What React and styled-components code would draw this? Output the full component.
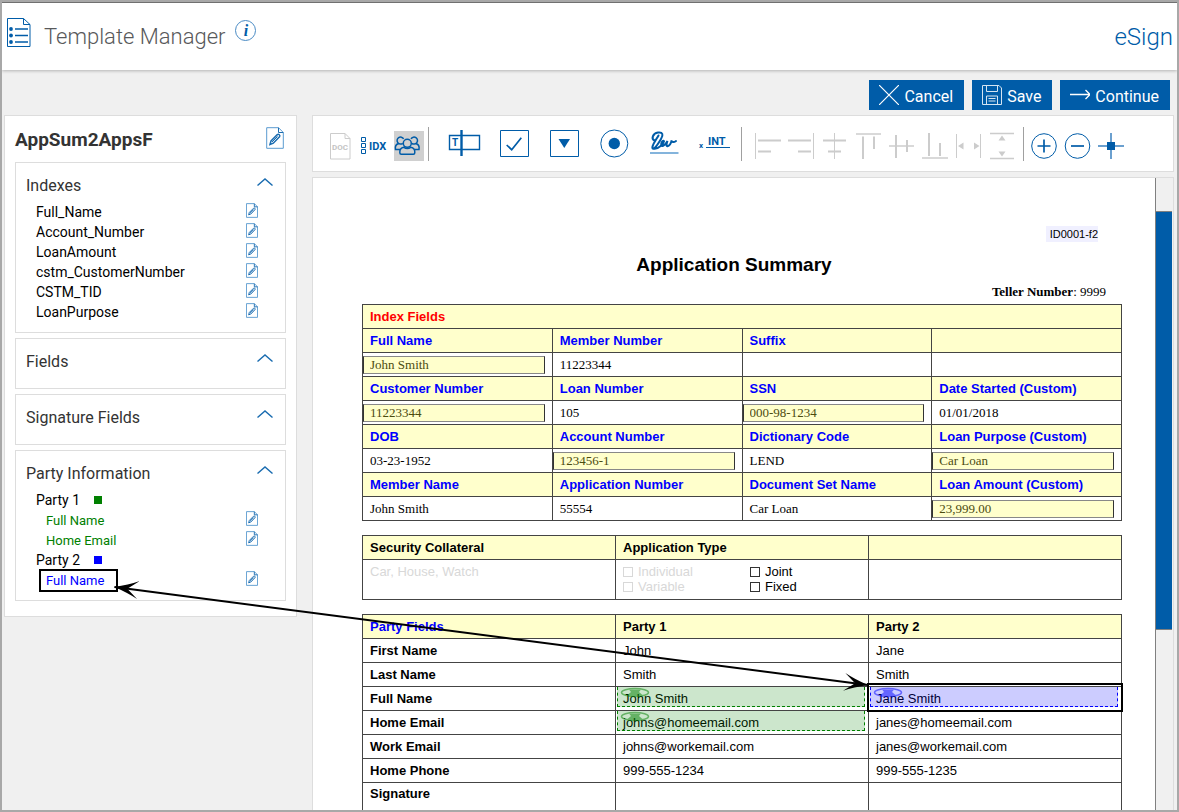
import React, { useLayoutEffect, useRef, useState } from "react";
import styled, { createGlobalStyle } from "styled-components";

const indexes = [
  "Full_Name",
  "Account_Number",
  "LoanAmount",
  "cstm_CustomerNumber",
  "CSTM_TID",
  "LoanPurpose",
];

// a cell starting with "=" is an editable index field
const indexRows = [
  ["Full Name", "Member Number", "Suffix", ""],
  ["=John Smith", "11223344", "", ""],
  ["Customer Number", "Loan Number", "SSN", "Date Started (Custom)"],
  ["=11223344", "105", "=000-98-1234", "01/01/2018"],
  ["DOB", "Account Number", "Dictionary Code", "Loan Purpose (Custom)"],
  ["03-23-1952", "=123456-1", "LEND", "=Car Loan"],
  [
    "Member Name",
    "Application Number",
    "Document Set Name",
    "Loan Amount (Custom)",
  ],
  ["John Smith", "55554", "Car Loan", "=23,999.00"],
];

const partyRows = [
  ["First Name", "John", "Jane"],
  ["Last Name", "Smith", "Smith"],
  ["Full Name", "John Smith", "Jane Smith", "green", "blue"],
  ["Home Email", "johns@homeemail.com", "janes@homeemail.com", "green"],
  ["Work Email", "johns@workemail.com", "janes@workemail.com"],
  ["Home Phone", "999-555-1234", "999-555-1235"],
];

const PageIcon = () => (
  <svg width="24" height="31" viewBox="0 0 24 31" fill="none" stroke="#005ca8">
    <path d="M.5 1.5h16l6.500 6v22H.5z" />
    <path d="M16.500 1.500v6H23" />
    <path d="M8 12h13M8 18.500h13M8 25h13" strokeWidth="1.500" />
    <g fill="#005ca8" stroke="none">
      <circle cx="4" cy="12" r="1.900" />
      <circle cx="4" cy="18.500" r="1.900" />
      <circle cx="4" cy="25" r="1.900" />
    </g>
  </svg>
);

const EditIcon = ({ small }) => (
  <svg
    width={small ? 12 : 18}
    height={small ? 15 : 22}
    viewBox="0 0 18 22"
    fill="none"
    stroke="#1a6cb0"
    strokeWidth={small ? 1.4 : 1}
  >
    <path d="M.7.700h11.800l4.800 4.800v15.800H.7z" stroke="#5b9bd0" />
    <path d="M12.500.700v4.800h4.800" />
    <path
      d="M4 17.500l1-3.600L11.300 7.600q1-.8 2 .1t.2 2L7.300 16.200z"
      strokeWidth="1.500"
    />
    <path d="M6 15l5.500-5.500" />
  </svg>
);

const tools = {
  doc: (
    <g stroke="#ccc">
      <path d="M4.500 2.500H19l5 5v20.500H4.500z" />
      <path d="M19 2.500v5h5" />
      <Glyph x="14" y="18.500" size={8} muted="true" textAnchor="middle">
        DOC
      </Glyph>
    </g>
  ),
  idx: (
    <g>
      <path d="M1.500 6.500h4v4h-4zM1.500 12.500h4v4h-4zM1.500 18.500h4v4h-4z" />
      <Glyph x="9" y="19" size={11}>
        IDX
      </Glyph>
    </g>
  ),
  parties: (
    <g strokeWidth="1.500">
      <path d="M8.800 12.300a3.500 3.500 0 1 1 .8-4.500M17.800 12.300a3.500 3.500 0 1 0-.8-4.500" />
      <path d="M6 18.500H1.500q-.9-5 3.300-6M20.500 18.500H25q.9-5-3.300-6" />
      <circle cx="13.300" cy="12.300" r="4" />
      <path d="M9.800 16.300q-4.300.7-4 5.400 0 1.500 1.500 1.500h12q1.500 0 1.500-1.500 .300-4.700-4-5.400-3.500 2.200-7 0z" />
    </g>
  ),
  text: (
    <g>
      <path d="M-.5 4.500h30v14h-30z" strokeWidth="1.400" />
      <path d="M11.500-1v26" strokeWidth="2.400" />
      <Glyph x="2" y="15" size={10}>
        T
      </Glyph>
    </g>
  ),
  check: (
    <g>
      <path d="M.5-.5h28v26h-28z" />
      <path d="M6.700 14l5 4.700L21.300 6.700" strokeWidth="1.700" />
    </g>
  ),
  select: (
    <g>
      <path d="M.5-.5h28v26h-28z" />
      <path d="M8.500 8H20l-5.700 9z" fill="#005ca8" stroke="none" />
    </g>
  ),
  radio: (
    <g>
      <circle cx="14.300" cy="12.500" r="13.500" />
      <circle cx="14.300" cy="12.500" r="5.700" fill="#005ca8" stroke="none" />
    </g>
  ),
  signature: (
    <g>
      <path d="M0 22h28.500" stroke="#5b9bd0" strokeWidth="1.500" />
      <path
        d="M4.500 9.500C1 8 2.500 2.500 8 1.500c5-.7 5.500 2.500 3 6.500-2.500 4.300-6 9.500-7.800 9.800-2-.3 0-4.800 2.300-8.300C7 7 8 5.500 8.500 4.500M4 17.800c4 .7 9.500-5 10-7.500-.2-1.300-2.500-.3-2.800 2.700-.2 3.500 3.300 2.500 6.300-3-1 2.500-1.500 5.300 0 5.300 1.800-.3 3.500-3 4.200-6-.2 1.700 1.800 2.500 4.300.7"
        strokeWidth="2"
        strokeLinecap="round"
      />
    </g>
  ),
  initials: (
    <g>
      <path d="M6 16.500h24" />
      <Glyph x="-1" y="17" size={8}>
        x
      </Glyph>
      <Glyph x="8" y="14" size={11}>
        INT
      </Glyph>
    </g>
  ),
  left: (
    <g>
      <path d="M1.500 2v26" />
      <path d="M4 9.500h23M4 20.500h13" strokeWidth="2" />
    </g>
  ),
  right: (
    <g>
      <path d="M26.500 2v26" />
      <path d="M1 9.500h23M11 20.500h13" strokeWidth="2" />
    </g>
  ),
  center: (
    <g>
      <path d="M14.500 2v26" />
      <path d="M3 9.500h23M8 20.500h13" strokeWidth="2" />
    </g>
  ),
  top: (
    <g>
      <path d="M3 3h25" strokeWidth="1.500" />
      <path d="M10 5.500V28M21 5.500V18" strokeWidth="2" />
    </g>
  ),
  middle: (
    <g>
      <path d="M3 15h25" strokeWidth="1.500" />
      <path d="M10 4v23M21 9v12" strokeWidth="2" />
    </g>
  ),
  bottom: (
    <g>
      <path d="M3 27h26" strokeWidth="1.500" />
      <path d="M10 2v23M21 12v13" strokeWidth="2" />
    </g>
  ),
  horizontal: (
    <g>
      <path d="M4.500 3v24M28.500 3v24" />
      <path d="M6 15l5.500-3.500v7zM27.500 15l-5.500-3.500v7z" fill="#ccc" stroke="none" />
    </g>
  ),
  vertical: (
    <g>
      <path d="M5 2.500h24M5 27.500h24" strokeWidth="1.500" />
      <path d="M17 4.500l3.500 5h-7zM17 25.500l3.500-5h-7z" fill="#ccc" stroke="none" />
    </g>
  ),
  zoomIn: (
    <g>
      <circle cx="15" cy="15" r="12.300" />
      <path d="M8.500 15h13M15 8.500v13" strokeWidth="1.700" />
    </g>
  ),
  zoomOut: (
    <g>
      <circle cx="15.500" cy="15" r="12.300" />
      <path d="M9 15h13" strokeWidth="1.700" />
    </g>
  ),
  snap: (
    <g>
      <path d="M3 15h26M16 2v26" stroke="#6ba0cf" strokeWidth="2" />
      <path d="M12 11h8v8h-8z" fill="#005ca8" stroke="none" />
    </g>
  ),
};

function Glyph({ size, muted, children, ...rest }) {
  return (
    <text
      fontFamily="Roboto, sans-serif"
      fontWeight="700"
      fontSize={size}
      fill={muted ? "#c4c4c4" : "#005ca8"}
      stroke="none"
      {...rest}
    >
      {children}
    </text>
  );
}

const Tool = ({ name, label, muted, active }) => (
  <ToolButton type="button" aria-label={label} $active={active}>
    <svg
      width="30"
      height="30"
      viewBox="0 0 30 30"
      fill="none"
      stroke={muted ? "#ccc" : "#005ca8"}
    >
      {tools[name]}
    </svg>
  </ToolButton>
);

const Section = ({ title, children }) => (
  <SectionBox>
    <SectionHead>
      <SectionTitle>{title}</SectionTitle>
      <IconButton type="button" aria-label={"Collapse " + title}>
        <svg width="16" height="8" viewBox="0 0 16 8" fill="none" stroke="#1a6cb0">
          <path d="M.5 7.500L8 1l7.500 6.500" strokeWidth="1.400" />
        </svg>
      </IconButton>
    </SectionHead>
    <List>{children}</List>
  </SectionBox>
);

const Item = ({ name, color, anchor }) => (
  <Row $color={color}>
    {anchor ? (
      <Framed>
        {name}
        <LabelFrame ref={anchor} />
      </Framed>
    ) : (
      <span>{name}</span>
    )}
    <IconButton type="button" aria-label={"Edit " + name}>
      <EditIcon small />
    </IconButton>
  </Row>
);

const PartyMark = ({ color }) => (
  <Mark $color={color}>
    <svg width="30" height="11" viewBox="0 0 30 11" fill="none" stroke={color}>
      <ellipse cx="15" cy="5.500" rx="13.500" ry="4" strokeWidth="1.500" />
      <path d="M9 2.500h12l-2 2.500 4 3.500-8 1-8-1L11 5z" fill={color} stroke="none" />
    </svg>
  </Mark>
);

const App = () => {
  const frame = useRef(null);
  const from = useRef(null);
  const to = useRef(null);
  const [line, setLine] = useState(null);

  useLayoutEffect(() => {
    const measure = () => {
      const base = frame.current.getBoundingClientRect();
      const a = from.current.getBoundingClientRect();
      const b = to.current.getBoundingClientRect();
      setLine({
        x1: a.right - base.left - 4,
        y1: a.bottom - base.top - 5,
        x2: b.left - base.left + 1,
        y2: b.top - base.top + 2,
      });
    };
    measure();
    window.addEventListener("resize", measure);
    return () => window.removeEventListener("resize", measure);
  }, []);

  return (
    <Frame>
      <GlobalStyle />
      <Header>
        <PageIcon />
        <Title>Template Manager</Title>
        <InfoButton type="button" aria-label="Information">
          i
        </InfoButton>
        <Product>eSign</Product>
      </Header>
      <Actions>
        <ActionButton type="button">
          <svg width="20" height="20" viewBox="0 0 20 20" fill="none" stroke="#fff">
            <path d="M0 0l20 20M20 0L0 20" strokeWidth="1.200" />
          </svg>
          <span>Cancel</span>
        </ActionButton>
        <ActionButton type="button">
          <svg width="20" height="20" viewBox="0 0 20 20" fill="none" stroke="#d5e4f1">
            <path d="M.5.500h16.500l2.500 2.500v16.500H.5z" />
            <path d="M4.500.500v6h11v-6M4.500 19.500v-8.500h11v8.500M6.500 13.500h7M6.500 16h7" />
          </svg>
          <span>Save</span>
        </ActionButton>
        <ActionButton type="button">
          <svg width="20" height="20" viewBox="0 0 20 20" fill="none" stroke="#fff">
            <path d="M0 9.500h20M15.500 5l4.500 4.500-4.500 4.500" strokeWidth="1.300" />
          </svg>
          <span>Continue</span>
        </ActionButton>
      </Actions>
      <Content>
        <Sidebar>
          <NameRow>
            <TemplateName>AppSum2AppsF</TemplateName>
            <IconButton type="button" aria-label="Edit template">
              <EditIcon />
            </IconButton>
          </NameRow>
          <Section title="Indexes">
            {indexes.map((name) => (
              <Item key={name} name={name} />
            ))}
          </Section>
          <Section title="Fields" />
          <Section title="Signature Fields" />
          <Section title="Party Information">
            <Party>
              Party 1 <Swatch $color="green" />
            </Party>
            <Item name="Full Name" color="green" />
            <Item name="Home Email" color="green" />
            <Party>
              Party 2 <Swatch $color="blue" />
            </Party>
            <Item name="Full Name" color="blue" anchor={from} />
          </Section>
        </Sidebar>
        <Workspace>
          <Toolbar>
            <ToolGroup $gap={4}>
              <Tool name="doc" label="Document" muted />
              <Tool name="idx" label="Indexes" />
              <Tool name="parties" label="Parties" active />
            </ToolGroup>
            <Divider $before={4} $after={21} />
            <ToolGroup $gap={20}>
              <Tool name="text" label="Text field" />
              <Tool name="check" label="Check box" />
              <Tool name="select" label="Drop-down" />
              <Tool name="radio" label="Radio button" />
              <Tool name="signature" label="Signature" />
              <Tool name="initials" label="Initials" />
            </ToolGroup>
            <Divider $before={11} $after={12} />
            <ToolGroup $gap={3}>
              <Tool name="left" label="Align left" muted />
              <Tool name="right" label="Align right" muted />
              <Tool name="center" label="Align center" muted />
              <Tool name="top" label="Align top" muted />
              <Tool name="middle" label="Align middle" muted />
              <Tool name="bottom" label="Align bottom" muted />
              <Tool name="horizontal" label="Same width" muted />
              <Tool name="vertical" label="Same height" muted />
            </ToolGroup>
            <Divider $before={8} $after={5} />
            <ToolGroup $gap={3}>
              <Tool name="zoomIn" label="Zoom in" />
              <Tool name="zoomOut" label="Zoom out" />
              <Tool name="snap" label="Snap" />
            </ToolGroup>
          </Toolbar>
          <Viewer>
            <Sheet>
              <FormId>ID0001-f2</FormId>
              <SheetTitle>Application Summary</SheetTitle>
              <Teller>
                <b>Teller Number</b>: 9999
              </Teller>
              <Table>
                <tbody>
                  <tr>
                    <HeadCell colSpan={4} $color="red">
                      Index Fields
                    </HeadCell>
                  </tr>
                  {indexRows.map((row, r) => (
                    <tr key={r}>
                      {row.map((text, c) => {
                        if (r % 2 === 0) {
                          return (
                            <HeadCell key={c} $color="blue">
                              {text}
                            </HeadCell>
                          );
                        }
                        if (text[0] === "=") {
                          return (
                            <FieldCell key={c}>
                              <Field
                                aria-label={indexRows[r - 1][c]}
                                defaultValue={text.slice(1)}
                              />
                            </FieldCell>
                          );
                        }
                        return (
                          <Cell key={c} $serif>
                            {text}
                          </Cell>
                        );
                      })}
                    </tr>
                  ))}
                </tbody>
              </Table>
              <Table>
                <tbody>
                  <tr>
                    <HeadCell>Security Collateral</HeadCell>
                    <HeadCell>Application Type</HeadCell>
                    <HeadCell />
                  </tr>
                  <tr>
                    <TopCell $muted>Car, House, Watch</TopCell>
                    <TopCell>
                      <Options>
                        <Option $muted>
                          <input type="checkbox" /> Individual
                        </Option>
                        <Option>
                          <input type="checkbox" /> Joint
                        </Option>
                        <Option $muted>
                          <input type="checkbox" /> Variable
                        </Option>
                        <Option>
                          <input type="checkbox" /> Fixed
                        </Option>
                      </Options>
                    </TopCell>
                    <TopCell />
                  </tr>
                </tbody>
              </Table>
              <Table>
                <thead>
                  <tr>
                    <HeadCell $color="blue">Party Fields</HeadCell>
                    <HeadCell>Party 1</HeadCell>
                    <HeadCell>Party 2</HeadCell>
                  </tr>
                </thead>
                <tbody>
                  {partyRows.map(([name, one, two, mark1, mark2]) => (
                    <tr key={name}>
                      <HeadCell $plain>{name}</HeadCell>
                      <Cell>
                        {one}
                        {mark1 && <PartyMark color={mark1} />}
                      </Cell>
                      <Cell>
                        {two}
                        {mark2 && <PartyMark color={mark2} />}
                        {mark2 && <CellFrame ref={to} />}
                      </Cell>
                    </tr>
                  ))}
                  <tr>
                    <SignatureHead $plain>Signature</SignatureHead>
                    <TopCell />
                    <TopCell />
                  </tr>
                </tbody>
              </Table>
            </Sheet>
            <ScrollTrack>
              <ScrollThumb />
            </ScrollTrack>
          </Viewer>
        </Workspace>
      </Content>
      <Overlay ref={frame}>
        <defs>
          <marker
            id="head"
            markerUnits="userSpaceOnUse"
            markerWidth="26"
            markerHeight="20"
            refX="24"
            refY="10"
            orient="auto-start-reverse"
          >
            <path d="M24 10Q10 6 0 1L11 10 0 19Q10 14 24 10z" />
          </marker>
        </defs>
        {line && (
          <line
            {...line}
            stroke="#000"
            strokeWidth="2"
            markerStart="url(#head)"
            markerEnd="url(#head)"
          />
        )}
      </Overlay>
    </Frame>
  );
};

export default App;

const GlobalStyle = createGlobalStyle`
  * {
    box-sizing: border-box;
  }

  body {
    margin: 0;
    font-family: Roboto, sans-serif;
  }

  svg {
    display: block;
    flex-shrink: 0;
  }
`;

const Frame = styled.div`
  position: relative;
  display: flex;
  flex-direction: column;
  height: 100vh;
  overflow: hidden;
  border: 2px solid #a8a8a8;
  background: #f0f0f0;
`;

const Overlay = styled.svg`
  position: absolute;
  inset: 0;
  width: 100%;
  height: 100%;
  pointer-events: none;
`;

const Header = styled.header`
  display: flex;
  align-items: center;
  flex-shrink: 0;
  height: 68px;
  padding: 0 4px 8px 5px;
  border-top: 1px solid #707070;
  background: white;
  box-shadow: 0 1px 3px rgba(0, 0, 0, 0.25);
`;

const Title = styled.h1`
  margin: 8px 10px 0 13px;
  font-size: 22px;
  line-height: 28px;
  font-weight: 300;
  color: #58595b;
`;

const InfoButton = styled.button`
  width: 21px;
  height: 21px;
  margin-bottom: 4px;
  padding: 0;
  border: 1px solid #4a8bc4;
  border-radius: 50%;
  background: white;
  color: #005ca8;
  font: italic bold 16px/18px "Liberation Serif", serif;
`;

const Product = styled.div`
  margin: 8px 0 0 auto;
  font-size: 24px;
  line-height: 28px;
  font-weight: 300;
  color: #005ca8;
`;

const Actions = styled.div`
  display: flex;
  justify-content: flex-end;
  flex-shrink: 0;
  gap: 8px;
  padding: 10px 7px 5px;
`;

const ActionButton = styled.button`
  display: flex;
  align-items: center;
  gap: 5px;
  height: 30px;
  padding: 0 11px 0 10px;
  border: 0;
  background: #005ca8;
  color: white;
  font: 400 16px/20px Roboto, sans-serif;

  span {
    padding-top: 4px;
  }
`;

const Content = styled.main`
  display: grid;
  grid-template-columns: 293px minmax(0, 1fr);
  gap: 15px;
  flex: 1;
  min-height: 0;
  padding: 0 3px 0 2px;
`;

const Sidebar = styled.aside`
  display: flex;
  flex-direction: column;
  align-self: start;
  gap: 5px;
  padding: 0 10px 15px;
  border: 1px solid #ddd;
  background: white;
`;

const NameRow = styled.div`
  display: flex;
  align-items: center;
  justify-content: space-between;
  height: 41px;
  padding: 2px 2px 0 0;
`;

const TemplateName = styled.h2`
  margin: 4px 0 0;
  font-size: 19px;
  line-height: 24px;
  font-weight: 700;
  color: #333;
`;

const IconButton = styled.button`
  display: flex;
  padding: 0;
  border: 0;
  background: none;
`;

const SectionBox = styled.section`
  padding: 10px;
  border: 1px solid #ddd;
`;

const SectionHead = styled.div`
  display: flex;
  justify-content: space-between;
  height: 29px;
  padding-right: 2px;

  button {
    align-self: flex-start;
    padding-top: 5px;
  }
`;

const SectionTitle = styled.h3`
  margin: 0;
  font-size: 16px;
  line-height: 26px;
  font-weight: 400;
  color: #333;
`;

const List = styled.ul`
  margin: 0;
  padding: 0 17px 0 10px;
  list-style: none;
`;

const Row = styled.li`
  display: flex;
  justify-content: space-between;
  height: 20px;
  padding-left: ${(props) => (props.$color ? 10 : 0)}px;
  font-size: ${(props) => (props.$color ? 13 : 14)}px;
  line-height: ${(props) => (props.$color ? 22 : 20)}px;
  color: ${(props) => props.$color || "#000"};

  button {
    padding-top: 1px;
  }
`;

const Framed = styled.span`
  position: relative;
`;

const LabelFrame = styled.span`
  position: absolute;
  inset: -1px -14px -2px -7px;
  border: 2px solid #000;
`;

const Party = styled.li`
  display: grid;
  grid-template-columns: 58px 8px;
  align-items: center;
  height: 20px;
  font-size: 14px;
  line-height: 20px;
`;

const Swatch = styled.span`
  width: 8px;
  height: 8px;
  background: ${(props) => props.$color};
`;

const Workspace = styled.div`
  display: flex;
  flex-direction: column;
  gap: 5px;
  min-height: 0;
`;

const Toolbar = styled.div`
  display: flex;
  align-items: flex-end;
  flex-shrink: 0;
  height: 57px;
  padding: 0 13px 10px;
  border: 1px solid #ddd;
  background: white;
`;

const ToolGroup = styled.div`
  display: flex;
  gap: ${(props) => props.$gap}px;
`;

const Divider = styled.div`
  width: 1px;
  height: 34px;
  margin: 0 ${(props) => props.$after}px 0 ${(props) => props.$before}px;
  background: #a0a0a0;
`;

const ToolButton = styled.button`
  width: 30px;
  height: 30px;
  padding: 0;
  border: 0;
  background: ${(props) => (props.$active ? "#d0d0d0" : "none")};

  svg {
    overflow: visible;
  }
`;

const Viewer = styled.div`
  display: flex;
  flex: 1;
  min-height: 0;
  overflow: hidden;
  border: 1px solid #ddd;
  border-bottom: 0;
  background: white;
`;

const Sheet = styled.article`
  display: flex;
  flex-direction: column;
  flex: 1;
  padding-top: 48px;
  font-family: "Liberation Sans", Arial, sans-serif;
`;

const FormId = styled.div`
  align-self: flex-end;
  height: 16px;
  margin-right: 57px;
  padding-left: 4px;
  background: #f0f0ff;
  font-size: 11px;
  line-height: 16px;
`;

const SheetTitle = styled.h2`
  margin: 11px 0 7px;
  font-size: 19px;
  line-height: 24px;
  text-align: center;
`;

const Teller = styled.div`
  margin-bottom: 4px;
  padding-right: 49px;
  font-family: "Liberation Serif", "Times New Roman", serif;
  font-size: 13px;
  line-height: 16px;
  text-align: right;
`;

const Table = styled.table`
  width: calc(100% - 82px);
  margin: 0 33px 14px 49px;
  flex-shrink: 0;
  border-collapse: collapse;
  table-layout: fixed;
`;

const Cell = styled.td`
  position: relative;
  height: 24px;
  padding: 0 7px;
  border: 1px solid #444;
  font-family: ${(props) =>
    props.$serif
      ? '"Liberation Serif", "Times New Roman", serif'
      : '"Liberation Sans", Arial, sans-serif'};
  font-size: 13px;
  line-height: 16px;
`;

const HeadCell = styled.th`
  height: 24px;
  padding: 0 7px;
  border: 1px solid #444;
  background: ${(props) => (props.$plain ? "white" : "#ffffcc")};
  color: ${(props) => props.$color || "#000"};
  font-size: 13px;
  line-height: 16px;
  text-align: left;
`;

const SignatureHead = styled(HeadCell)`
  height: 40px;
  padding-top: 3px;
  vertical-align: top;
`;

const TopCell = styled(Cell)`
  height: 40px;
  padding-top: 4px;
  vertical-align: top;
  color: ${(props) => (props.$muted ? "#d8d8d8" : "#000")};
`;

const FieldCell = styled(Cell)`
  padding: 0 7px 0 0;
`;

const Field = styled.input`
  display: block;
  width: 100%;
  height: 18px;
  padding: 0 6px;
  border: 1px solid #888;
  border-left-color: #333;
  border-right-color: #333;
  background: #ffffcc;
  color: #4c4c10;
  font: 13px/16px "Liberation Serif", "Times New Roman", serif;
`;

const Options = styled.div`
  display: grid;
  grid-template-columns: 1fr 1fr;
  column-gap: 16px;
`;

const Option = styled.label`
  display: flex;
  align-items: center;
  gap: 5px;
  height: 15px;
  color: ${(props) => (props.$muted ? "#d8d8d8" : "#000")};

  input {
    appearance: none;
    width: 10px;
    height: 10px;
    margin: 0;
    border: 1px solid ${(props) => (props.$muted ? "#d8d8d8" : "#333")};
  }
`;

const Mark = styled.span`
  position: absolute;
  inset: 0 3px 3px 1px;
  padding-left: 2px;
  border: 1px dashed ${(props) => props.$color};
  border-top: 0;
  background: ${(props) =>
    props.$color === "green" ? "rgba(0, 128, 0, 0.2)" : "rgba(0, 0, 255, 0.2)"};

  svg {
    opacity: 0.5;
  }
`;

const CellFrame = styled.span`
  position: absolute;
  inset: -4px -2px -2px;
  z-index: 1;
  border: 2px solid #000;
`;

const ScrollTrack = styled.div`
  width: 18px;
  padding-top: 33px;
  border-left: 1px solid #808080;
  background: #f0f0f0;
`;

const ScrollThumb = styled.div`
  width: 16px;
  height: 70%;
  border-top: 1px solid #808080;
  border-bottom: 1px solid #808080;
  background: #005ca8;
`;
